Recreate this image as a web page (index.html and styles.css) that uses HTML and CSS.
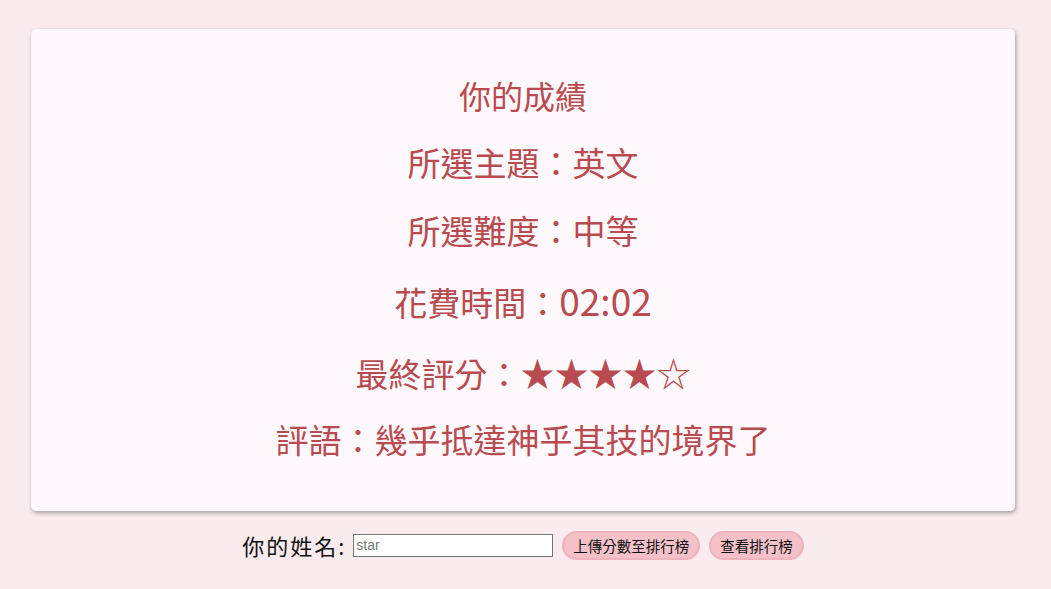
FILE: index.html
```html
<!DOCTYPE html>
<html lang="zh-Hant">
<head>
<meta charset="utf-8">
<title>你的成績</title>
<link rel="stylesheet" href="styles.css">
</head>
<body>
<div class="card">
  <div class="row title">你的成績</div>
  <div class="row">所選主題：英文</div>
  <div class="row">所選難度：中等</div>
  <div class="row time-row">花費時間：<span class="time">02:02</span></div>
  <div class="row stars-row">最終評分：<span class="stars">★★★★☆</span></div>
  <div class="row">評語：幾乎抵達神乎其技的境界了</div>
</div>
<div class="submit">
  <label class="name-label" for="name">你的姓名:</label>
  <input id="name" class="name-input" type="text" placeholder="star">
  <button class="btn">上傳分數至排行榜</button>
  <button class="btn">查看排行榜</button>
</div>
</body>
</html>
```
FILE: styles.css
```css
html, body {
  margin: 0;
  padding: 0;
}
body {
  background: #faecee;
  font-family: "Noto Sans CJK TC", "Noto Sans", sans-serif;
  padding: 29px 36px 0 31px;
}
.card {
  background: #fff8fc;
  border-radius: 5px;
  box-shadow: 1px 2px 4px rgba(0, 0, 0, 0.35);
  height: 482px;
  box-sizing: border-box;
  padding-top: 47px;
  display: flex;
  flex-direction: column;
  align-items: center;
  gap: 30px;
  color: #b94a4f;
}
.row {
  font-size: 33px;
  font-weight: 400;
  line-height: 38px;
  height: 38px;
  white-space: nowrap;
}
.title {
  font-size: 32px;
  margin-bottom: -1px;
}
.time-row {
  margin-top: 2px;
}
.time {
  font-size: 37px;
}
.stars-row {
  margin-top: 5px;
  margin-bottom: -2px;
}
.stars {
  font-size: 34px;
}
.submit {
  display: flex;
  justify-content: center;
  align-items: center;
  gap: 9px;
  margin-top: 18px;
}
.name-label {
  font-size: 22px;
  letter-spacing: 2px;
  color: #111;
  margin-right: -2px;
}
.name-input {
  width: 200px;
  height: 23px;
  box-sizing: border-box;
  border: 1px solid #767676;
  font-family: "Liberation Sans", Arial, sans-serif;
  font-size: 14px;
  padding: 1px 2px;
  margin: 0;
}
.name-input::placeholder {
  color: #777;
}
.btn {
  font-family: "Noto Sans CJK TC", sans-serif;
  font-size: 14.5px;
  color: #111;
  background: #f4c1c9;
  border: 2px solid #efb3bd;
  border-radius: 15px;
  height: 29px;
  padding: 0 9px;
  margin: 0;
}
```
